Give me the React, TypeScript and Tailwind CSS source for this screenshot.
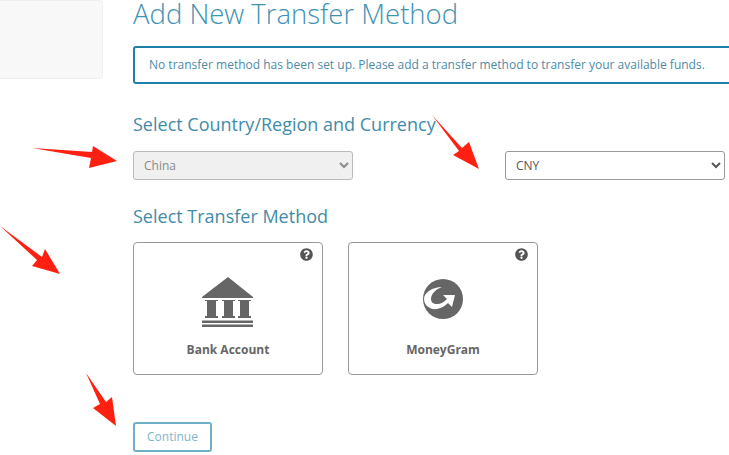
import React from 'react';
import { FaQuestionCircle } from 'react-icons/fa';

const arrows = [
  '32,148 92,152 93,146 117,161 89,168 91,158',
  '432,115 462,148 469,142 479,169 453,155 459,151',
  '0,226 42,257 45,249 60,274 32,266 37,260',
  '86,373 106,402 112,397 116,426 93,408 100,404',
];

const BankIcon = () => (
  <svg width="52" height="51" viewBox="0 0 52 51" className="mt-[6px] text-[#666666]" fill="currentColor">
    <polygon points="26,0 51,20 51,21 0,21 0,20" />
    <path d="M3 23h13v1h-2v15h2v2H3v-2h2V24H3z" />
    <path d="M20 23h13v1h-2v15h2v2H20v-2h2V24h-2z" />
    <path d="M36 23h13v1h-2v15h2v2H36v-2h2V24h-2z" />
    <rect x="0" y="43.5" width="51" height="2.5" />
    <rect x="0" y="47.5" width="51" height="2.5" />
  </svg>
);

const MoneyGramIcon = () => (
  <svg width="40" height="40" viewBox="0 0 40 40">
    <circle cx="20" cy="20" r="20" fill="#666666" />
    <path
      d="M19 8C10 8 1 13 1 20c0 7 7 11 13 10 5-1 8-3 11-6l4 4 3-12H20l4 4c-3 3-6 5-10 5-4 0-6-2-6-5 0-5 5-10 11-12z"
      fill="#ffffff"
    />
  </svg>
);

const MethodCard = ({ label, icon }: { label: string; icon: React.ReactNode }) => (
  <div className="relative w-[190px] h-[133px] rounded-[4px] border border-[#999999] bg-white flex flex-col items-center">
    <FaQuestionCircle className="absolute top-[5px] right-[9px] text-[13px] text-[#555555]" />
    <div className="h-[86px] mt-[13px] flex items-center justify-center">{icon}</div>
    <div className="text-[12px] leading-[16px] font-bold text-[#666666]">{label}</div>
  </div>
);

export default function App() {
  return (
    <div className="relative w-[729px] h-[455px] overflow-hidden bg-white flex font-['Open_Sans',sans-serif]">
      <div className="w-[103px] h-[79px] shrink-0 bg-[#f8f8f8] border border-l-0 border-[#f0f0f0] rounded-r-[4px]" />
      <div className="ml-[30px] w-[620px] shrink-0">
        <h1 className="text-[27.5px] leading-[28px] font-light text-[#3f92b3] whitespace-nowrap">Add New Transfer Method</h1>
        <div className="mt-[18px] w-[640px] h-[38px] border-2 border-[#1f7fa8] rounded-[3px] flex items-center pl-[14px] text-[12px] text-[#4d8ca6] whitespace-nowrap">
          No transfer method has been set up. Please add a transfer method to transfer your available funds.
        </div>
        <h2 className="mt-[28px] text-[18px] leading-[24px] text-[#3f8ca8] whitespace-nowrap">Select Country/Region and Currency</h2>
        <div className="mt-[15px] flex gap-[152px]">
          <select disabled defaultValue="China" className="w-[220px] h-[29px] pl-[6px] rounded-[3px] border border-[#bbbbbb] bg-[#f0f0f0] text-[12px] text-[#8a8a8a]">
            <option>China</option>
          </select>
          <select defaultValue="CNY" className="w-[220px] h-[29px] pl-[6px] rounded-[3px] border border-[#999999] bg-white text-[12px] text-[#555555]">
            <option>CNY</option>
          </select>
        </div>
        <h2 className="mt-[24px] text-[18px] leading-[24px] text-[#3f8ca8]">Select Transfer Method</h2>
        <div className="mt-[14px] flex gap-[25px]">
          <MethodCard label="Bank Account" icon={<BankIcon />} />
          <MethodCard label="MoneyGram" icon={<MoneyGramIcon />} />
        </div>
        <button className="mt-[47px] w-[79px] h-[30px] rounded-[3px] border-2 border-[#6fb0c9] bg-white text-[12px] text-[#7fb5c9]">
          Continue
        </button>
      </div>
      {/* annotation arrows drawn over the page */}
      <svg className="absolute inset-0 pointer-events-none" width="729" height="455" viewBox="0 0 729 455">
        {arrows.map(points => (
          <polygon key={points} points={points} fill="#ff2012" />
        ))}
      </svg>
    </div>
  );
}
